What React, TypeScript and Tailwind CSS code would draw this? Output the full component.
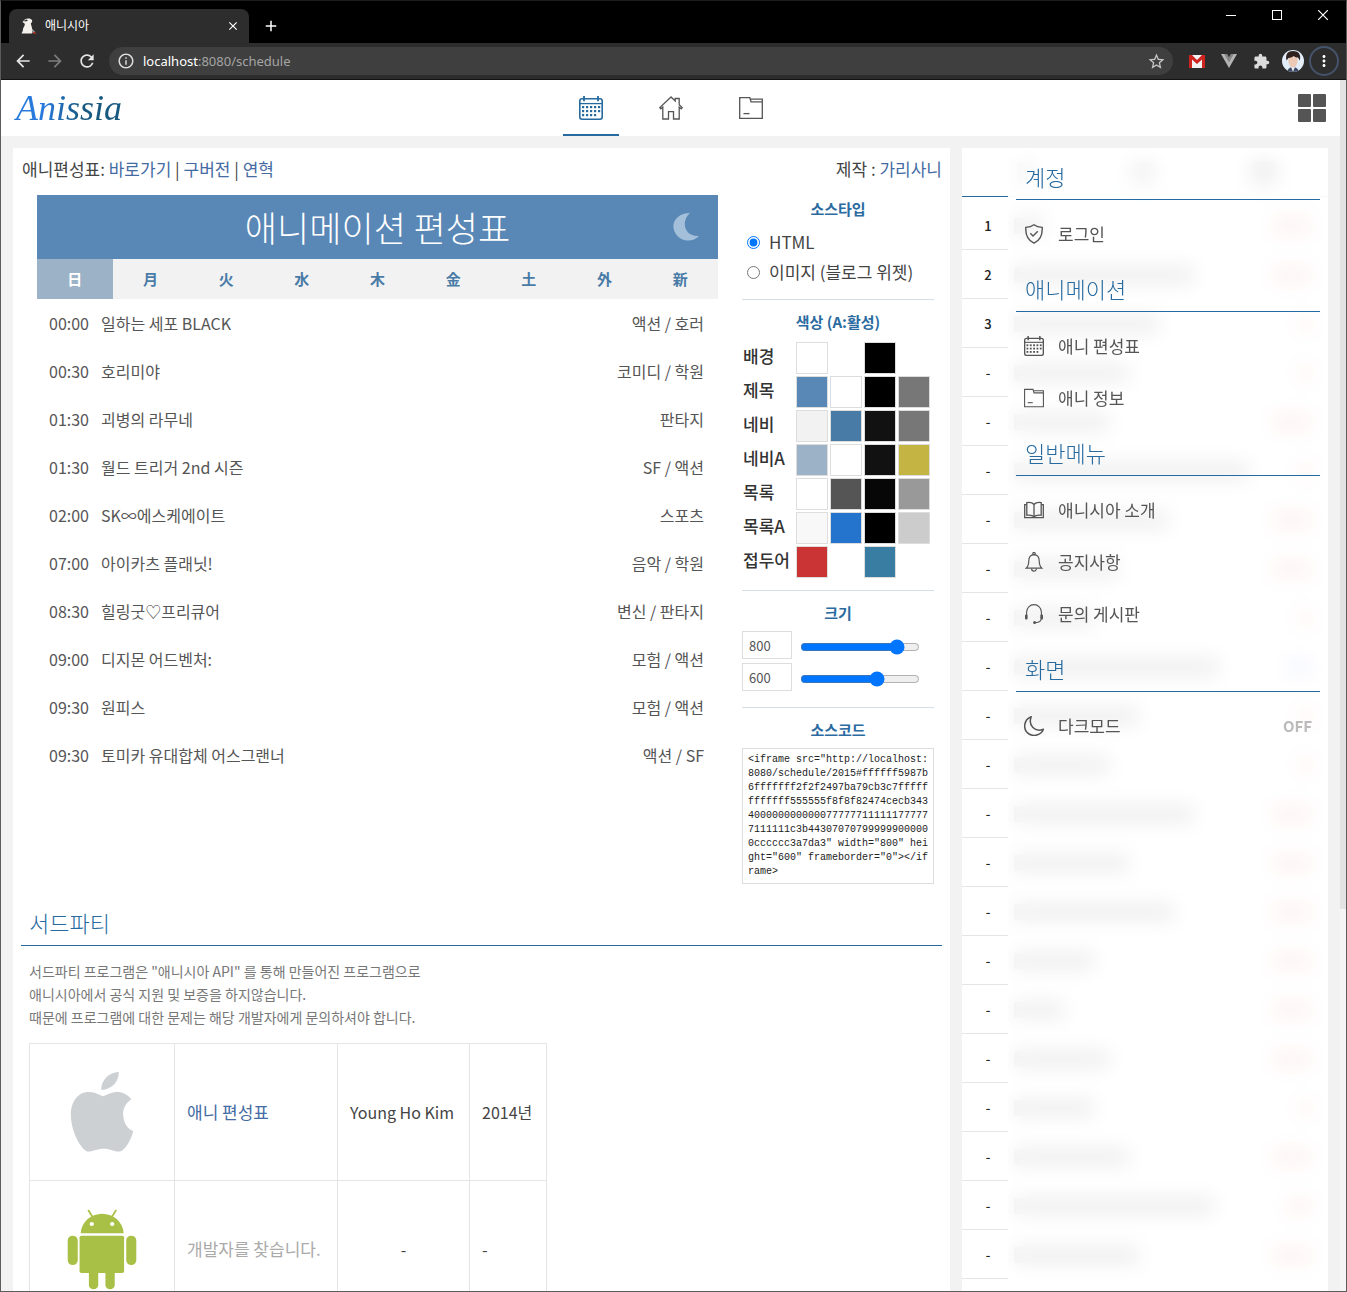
import { useState } from "react";
import type { ReactNode } from "react";
import { MdArrowBack, MdArrowForward, MdRefresh, MdInfoOutline, MdStarBorder, MdExtension, MdMoreVert, MdClose, MdAdd } from "react-icons/md";

type IconProps = { className?: string };

function CalendarIcon({ className = "" }: IconProps) {
  const dots = [
    [4, 11], [8, 11], [12, 11], [16, 11], [20, 11],
    [4, 15], [8, 15], [12, 15], [16, 15], [20, 15],
    [4, 19], [8, 19], [12, 19], [16, 19],
  ];
  return (
    <svg viewBox="0 0 24 24" className={className} fill="none" stroke="currentColor" aria-hidden="true">
      <rect x="0.8" y="2.8" width="22.4" height="20.4" rx="2.2" strokeWidth="1.6" />
      <path d="M1 7.6h22" strokeWidth="1.3" />
      <path d="M5 0v5.2M19 0v5.2" strokeWidth="1.8" />
      {dots.map(([x, y]) => (
        <rect key={`${x}-${y}`} x={x - 1} y={y - 1} width="2.2" height="2.2" fill="currentColor" stroke="none" />
      ))}
    </svg>
  );
}

function HomeIcon({ className = "" }: IconProps) {
  return (
    <svg viewBox="0 0 24 24" className={className} fill="none" stroke="currentColor" strokeWidth="1.3" aria-hidden="true">
      <path d="M12 1 .8 11.600l1 1.200 2-1.600V23h5.700v-7.400h5V23h5.700V11.200l2 1.600 1-1.200-3-2.800V2.500h-4v2.400z" />
    </svg>
  );
}

function FolderIcon({ className = "" }: IconProps) {
  return (
    <svg viewBox="0 0 24 24" className={className} fill="none" stroke="currentColor" strokeWidth="1.3" aria-hidden="true">
      <path d="M.7 1.600h10.100l1.200 4.200h11.300v16.600H.7z" />
      <path d="M11 3.200h12.300v2.600" />
      <path d="M4.500 17.600h6" />
    </svg>
  );
}

function ShieldIcon({ className = "" }: IconProps) {
  return (
    <svg viewBox="0 0 20 20" className={className} fill="none" stroke="currentColor" strokeWidth="1.4" aria-hidden="true">
      <path d="M10 .8c2.200 1.600 5 2.400 8.200 2.600.400 7.400-1.600 12.600-8.200 15.800C3.400 16 1.400 10.800 1.800 3.400 5 3.200 7.800 2.400 10 .8z" />
      <path d="m6.300 9.300 2.700 2.700 4.800-4.800" />
    </svg>
  );
}

function BookIcon({ className = "" }: IconProps) {
  return (
    <svg viewBox="0 0 20 20" className={className} fill="none" stroke="currentColor" strokeWidth="1.300" aria-hidden="true">
      <path d="M10 4.500C8.500 2.600 5.500 2.200 2.800 2.600v12.600c2.700-.3 5.700-.1 7.200 1.600 1.500-1.700 4.500-1.900 7.200-1.600V2.600C14.500 2.200 11.500 2.600 10 4.500zv12.300" />
      <path d="M2.800 4.600H.700v13h18.600v-13h-2.100" />
    </svg>
  );
}

function BellIcon({ className = "" }: IconProps) {
  return (
    <svg viewBox="0 0 20 20" className={className} fill="none" stroke="currentColor" strokeWidth="1.200" aria-hidden="true">
      <path d="M10 2.600c-3.600 0-5.200 2.600-5.200 6.200 0 4-.8 5.800-2.600 7.400h15.600c-1.800-1.600-2.600-3.400-2.600-7.400 0-3.600-1.600-6.200-5.200-6.200z" />
      <circle cx="10" cy="1.700" r="1.200" />
      <path d="M7.600 16.400c0 3.600 4.800 3.600 4.800 0" />
    </svg>
  );
}

function HeadsetIcon({ className = "" }: IconProps) {
  return (
    <svg viewBox="0 0 20 20" className={className} fill="none" stroke="currentColor" strokeWidth="1.1" aria-hidden="true">
      <path d="M2.600 11V8a7.400 7.400 0 0 1 14.800 0v6c0 3-2 4.600-6 4.700" />
      <rect x="1" y="10.400" width="2.600" height="5" rx="1" fill="currentColor" stroke="none" />
      <rect x="16.400" y="10.400" width="2.600" height="5" rx="1" fill="currentColor" stroke="none" />
      <circle cx="10.600" cy="18.500" r="1.500" fill="currentColor" stroke="none" />
    </svg>
  );
}

function MoonIcon({ className = "" }: IconProps) {
  return (
    <svg viewBox="0 0 20 20" className={className} fill="none" stroke="currentColor" strokeWidth="1.500" strokeLinejoin="round" aria-hidden="true">
      <path d="M7.200.7C-.5 3.500-1.500 14 5 18c5.500 3.300 12.500.5 14.400-4.800C11 16.600 3.800 9.500 7.200.7z" />
    </svg>
  );
}

function AppleLogo() {
  return (
    <svg viewBox="190 120 190 252" preserveAspectRatio="none" className="mx-auto h-21 w-[68px]" fill="#ccd0d3" role="img" aria-label="Apple">
      <path d="M287 199C275 192 262 186 248 186 216 186 198 218 198 254c0 46 24 96 42 108 12 8 24-6 50-6 24 0 36 14 50 6 14-8 28-38 32-59-16-5-28-27-28-51 0-20 10-34 23-44-9-14-25-22-39-22-16 0-28 8-41 13z" />
      <path d="M332 126c0 26-16 52-49 54-1-28 19-52 49-54z" />
    </svg>
  );
}

function AndroidLogo() {
  return (
    <svg viewBox="188 536 195 243" preserveAspectRatio="none" className="mx-auto h-[81px] w-[70px]" fill="#a9c047" role="img" aria-label="Android">
      <path d="M226 609c2-34 28-59 60-59s58 25 60 59z" />
      <path d="m247 539 13 22M325 539l-13 22" stroke="#a9c047" strokeWidth="5" />
      <rect x="190" y="616" width="28" height="88" rx="14" />
      <rect x="353" y="616" width="28" height="88" rx="14" />
      <rect x="223" y="616" width="124" height="112" rx="5" />
      <rect x="249" y="700" width="26" height="77" rx="13" />
      <rect x="295" y="700" width="26" height="77" rx="13" />
      <circle cx="257" cy="581" r="6" fill="#fff" />
      <circle cx="314" cy="581" r="6" fill="#fff" />
    </svg>
  );
}

function BrowserChrome() {
  return (
    <div className="shrink-0 border-b border-[#141414] bg-[#2d2d2d] font-['Noto_Sans','Noto_Sans_CJK_KR',sans-serif] text-white">
      <div className="flex h-[42px] bg-black">
        <div className="mt-2 ml-2 flex w-60 items-center rounded-t-lg bg-[#2d2d2d] pr-2 pl-3">
          <svg viewBox="0 0 16 16" className="size-4 shrink-0" aria-hidden="true">
            <path d="M1.500 4 4 1.200C6 0 10 0 11 2c.6 1.500-.2 2.600-1.200 3.400L11 10l.6 4.500-1 1H.5c.6-1.500 1.200-2 1.400-3.500C2 9 4.500 8 3.600 5.600z" fill="#f4f1ec" />
            <path d="m2.500 3 2.800-1.400 1.700.6-2 1.200z" fill="#333" />
            <path d="m12 15.500.6-2 3 2z" fill="#d8382c" />
            <path d="m10.500 11 3 3" stroke="#ddd" />
          </svg>
          <span className="ml-2 flex-1 text-xs leading-4">애니시아</span>
          <button aria-label="Close tab" className="grid size-4 place-items-center"><MdClose className="size-3.5" /></button>
        </div>
        <button aria-label="New tab" className="mt-2 ml-3 grid w-5 place-items-center"><MdAdd className="size-[18px]" /></button>
        <div className="ml-auto flex h-7">
          <button aria-label="Minimize" className="grid w-[46px] place-items-center"><span className="h-px w-2.5 bg-white" /></button>
          <button aria-label="Maximize" className="grid w-[46px] place-items-center"><span className="size-2.5 border border-white" /></button>
          <button aria-label="Close" className="grid w-[46px] place-items-center">
            <svg viewBox="0 0 10 10" className="size-2.5" stroke="#fff" strokeWidth="1.2"><path d="m0 0 10 10M10 0 0 10" /></svg>
          </button>
        </div>
      </div>
      <div className="flex h-9 items-center pr-[7px] pl-3">
        <button aria-label="Back" className="w-8"><MdArrowBack className="size-5 text-[#e4e4e4]" /></button>
        <button aria-label="Forward" className="w-8"><MdArrowForward className="size-5 text-[#7d7d7d]" /></button>
        <button aria-label="Reload" className="w-8"><MdRefresh className="size-5 text-[#e4e4e4]" /></button>
        <div className="flex h-7 flex-1 items-center rounded-full bg-[#3f3f3f] pr-[7px] pl-2">
          <MdInfoOutline className="size-[18px] text-[#dcdcdc]" />
          <div className="ml-2 flex-1 text-[13px] leading-5 text-[#a5a5a5]"><span className="text-white">localhost</span>:8080/schedule</div>
          <button aria-label="Bookmark"><MdStarBorder className="size-[19px] text-[#c8c8c8]" /></button>
        </div>
        <div className="ml-2 flex items-center">
          <div className="grid w-8 place-items-center">
            <svg viewBox="0 0 16 13" className="h-[13px] w-4" aria-label="Gmail" role="img">
              <rect width="16" height="13" rx="1" fill="#f3f3f3" />
              <path d="M0 0h3l5 5 5-5h3v13h-3V4.500l-5 4.500-5-4.500V13H0z" fill="#cf2320" />
            </svg>
          </div>
          <div className="grid w-8 place-items-center">
            <svg viewBox="0 0 16 14" className="h-3.5 w-4" aria-hidden="true">
              <path d="M0 0h5.500L8 4.500 10.500 0H16L8 14z" fill="#b5b5b5" />
              <path d="M3.200 0h3L8 3.200 9.800 0h3L8 8.500z" fill="#858585" />
            </svg>
          </div>
          <div className="grid w-8 place-items-center"><MdExtension className="size-[17px] text-[#dcdcdc]" /></div>
          <div className="grid w-8 place-items-center">
            <svg viewBox="0 0 22 22" className="size-[22px] rounded-full" role="img" aria-label="Profile">
              <rect width="22" height="22" fill="#e3eefa" />
              <path d="M5 22c1-4 4-5 6-5s5 1 6 5z" fill="#3d4963" />
              <ellipse cx="11" cy="11" rx="4.600" ry="6.500" fill="#ecc9b4" />
              <path d="M4.500 10.500C3 4 6 1 11 1s8.500 3 6.800 9.500L16 7.500c-2 .5-3-1-4.500-1.500C10 8 8 7.500 6.500 8z" fill="#2f211d" />
              <path d="m9 17 2 5 2-5z" fill="#e8e8ee" />
            </svg>
          </div>
          <button aria-label="Menu" className="grid size-[30px] place-items-center rounded-full border-2 border-[#45536b]"><MdMoreVert className="size-[18px]" /></button>
        </div>
      </div>
    </div>
  );
}

const tabs = [
  { label: "애니 편성표", Icon: CalendarIcon },
  { label: "홈", Icon: HomeIcon },
  { label: "애니 정보", Icon: FolderIcon },
];

function AppHeader() {
  return (
    <header className="grid h-14 shrink-0 grid-cols-[1fr_auto_1fr] bg-white">
      <a href="#" className="self-center justify-self-start bg-linear-to-r from-[#2779dc] from-35% to-[#17587f] to-65% bg-clip-text pr-1 pl-[15px] font-['Liberation_Serif',serif] text-4xl leading-[44px] text-transparent italic">
        Anissia
      </a>
      <nav className="flex gap-6">
        {tabs.map(({ label, Icon }, i) => (
          <a
            key={label}
            href="#"
            aria-label={label}
            className={i === 0 ? "grid w-14 place-items-center border-y-2 border-t-transparent border-b-[#266a9f] text-[#266a9f]" : "grid w-14 place-items-center border-y-2 border-transparent text-[#555]"}
          >
            <Icon className="size-6" />
          </a>
        ))}
      </nav>
      <button aria-label="메뉴" className="mr-[14px] grid grid-cols-2 gap-0.5 self-center justify-self-end">
        {[0, 1, 2, 3].map((n) => (
          <span key={n} className="size-[13px] rounded-[1px] bg-[#555]" />
        ))}
      </button>
    </header>
  );
}

const days = ["日", "月", "火", "水", "木", "金", "土", "外", "新"];
const shows = [
  ["00:00", "일하는 세포 BLACK", "액션 / 호러"],
  ["00:30", "호리미야", "코미디 / 학원"],
  ["01:30", "괴병의 라무네", "판타지"],
  ["01:30", "월드 트리거 2nd 시즌", "SF / 액션"],
  ["02:00", "SK∞에스케에이트", "스포츠"],
  ["07:00", "아이카츠 플래닛!", "음악 / 학원"],
  ["08:30", "힐링굿♡프리큐어", "변신 / 판타지"],
  ["09:00", "디지몬 어드벤처:", "모험 / 액션"],
  ["09:30", "원피스", "모험 / 액션"],
  ["09:30", "토미카 유대합체 어스그랜너", "액션 / SF"],
];

function Timetable() {
  const [day, setDay] = useState(0);
  return (
    <section className="min-w-0 flex-1">
      <div className="flex h-16 items-center bg-[#5987b6] px-4 text-white">
        <span className="w-8" />
        <h1 className="flex-1 text-center text-[35px] leading-10 font-light">애니메이션 편성표</h1>
        <button aria-label="다크모드" className="grid w-8 place-items-center">
          <svg viewBox="0 0 26 28" className="h-7 w-[26px]" fill="#a3bfd9"><path d="M17 0C4 0-3 10 2 19.500c4.500 9 17 11 24 3.500C12 24 7 9 17 0z" /></svg>
        </button>
      </div>
      <div className="grid h-10 grid-cols-9 bg-[#f2f2f2] text-[15px] font-bold">
        {days.map((d, i) => (
          <button key={d} onClick={() => setDay(i)} className={i === day ? "bg-[#9cb3c7] text-white" : "text-[#497ba7]"}>
            {d}
          </button>
        ))}
      </div>
      <ul className="text-base text-[#555]">
        {shows.map(([time, title, genre]) => (
          <li key={title} className="flex h-12 items-center pr-3.5 pl-3">
            <span className="w-[52px]">{time}</span>
            <span className="flex-1">{title}</span>
            <span>{genre}</span>
          </li>
        ))}
      </ul>
    </section>
  );
}

const palette: { name: string; colors: (string | null)[] }[] = [
  { name: "배경", colors: ["#ffffff", null, "#000000", null] },
  { name: "제목", colors: ["#5987b6", "#ffffff", "#000000", "#777777"] },
  { name: "네비", colors: ["#f2f2f2", "#497ba7", "#111111", "#777777"] },
  { name: "네비A", colors: ["#9cb3c7", "#ffffff", "#111111", "#c3b443"] },
  { name: "목록", colors: ["#ffffff", "#555555", "#070707", "#999999"] },
  { name: "목록A", colors: ["#f8f8f8", "#2474ce", "#000000", "#cccccc"] },
  { name: "접두어", colors: ["#cb3434", null, "#3a7da3", null] },
];

function GroupTitle({ children }: { children: ReactNode }) {
  return <h3 className="text-center text-[15px] leading-5 font-bold text-[#2b6b9f]">{children}</h3>;
}

function SizeField({ label, value, max, onChange }: { label: string; value: number; max: number; onChange: (n: number) => void }) {
  return (
    <div className="flex h-7 items-center">
      <input
        type="text"
        aria-label={label}
        value={value}
        onChange={(e) => onChange(Number(e.target.value) || 0)}
        className="h-7 w-[50px] border border-[#ddd] px-1.5 text-[13px] text-[#555]"
      />
      <input
        type="range"
        aria-label={label}
        min={200}
        max={max}
        value={value}
        onChange={(e) => onChange(Number(e.target.value))}
        className="mt-1 ml-2 w-30 accent-[#0075ff]"
      />
    </div>
  );
}

function WidgetSettings() {
  const [kind, setKind] = useState("html");
  const [width, setWidth] = useState(800);
  const [height, setHeight] = useState(600);
  const hash = palette
    .flatMap((row) => row.colors.slice(0, 2))
    .concat(palette.flatMap((row) => row.colors.slice(2)))
    .filter((c): c is string => c !== null)
    .map((c) => c.slice(1))
    .join("");
  const code = `<iframe src="http://localhost:8080/schedule/2015#${hash}" width="${width}" height="${height}" frameborder="0"></iframe>`;
  return (
    <div className="w-48 shrink-0 divide-y divide-[#d3dfe8]">
      <div className="pt-1 pb-3">
        <GroupTitle>소스타입</GroupTitle>
        <div className="mt-2 pl-[5px] text-[17px] leading-[30px] text-[#444]">
          <label className="flex items-center gap-[9px]">
            <input type="radio" name="kind" checked={kind === "html"} onChange={() => setKind("html")} className="size-[13px] accent-[#0075ff]" />
            HTML
          </label>
          <label className="flex items-center gap-[9px]">
            <input type="radio" name="kind" checked={kind === "image"} onChange={() => setKind("image")} className="size-[13px] accent-[#0075ff]" />
            이미지 (블로그 위젯)
          </label>
        </div>
      </div>
      <div className="pt-3 pb-3">
        <GroupTitle>색상 (A:활성)</GroupTitle>
        <div className="mt-2.5 flex flex-col gap-0.5">
          {palette.map((row) => (
            <div key={row.name} className="flex h-8 gap-0.5">
              <span className="w-[52px] pl-px text-[17px] leading-7 font-medium whitespace-nowrap text-[#333]">{row.name}</span>
              {row.colors.map((color, i) =>
                color ? (
                  <input
                    key={i}
                    type="color"
                    defaultValue={color}
                    aria-label={`${row.name} ${i + 1}`}
                    className="size-8 appearance-none border border-[#ddd] bg-white p-0 [&::-webkit-color-swatch]:rounded-none [&::-webkit-color-swatch]:border-0 [&::-webkit-color-swatch-wrapper]:p-0"
                  />
                ) : (
                  <span key={i} className="size-8" />
                ),
              )}
            </div>
          ))}
        </div>
      </div>
      <div className="pt-3 pb-4">
        <GroupTitle>크기</GroupTitle>
        <div className="mt-2 flex flex-col gap-1">
          <SizeField label="너비" value={width} max={900} onChange={setWidth} />
          <SizeField label="높이" value={height} max={800} onChange={setHeight} />
        </div>
      </div>
      <div className="pt-3">
        <GroupTitle>소스코드</GroupTitle>
        <textarea
          readOnly
          rows={9}
          aria-label="소스코드"
          value={code}
          className="mt-2 block w-full resize-none overflow-hidden border border-[#ddd] py-1 pr-1 pl-[5px] font-['Liberation_Mono',monospace] text-[10px] leading-[14px] break-all text-[#222]"
        />
      </div>
    </div>
  );
}

function ThirdParty() {
  return (
    <section className="mt-5">
      <h2 className="border-b border-[#266a9f] px-2 pb-1 text-[22px] leading-[37px] font-light text-[#266a9f]">서드파티</h2>
      <p className="mt-3.5 px-2 text-sm leading-[23px] text-[#777]">
        서드파티 프로그램은 "애니시아 API" 를 통해 만들어진 프로그램으로
        <br />
        애니시아에서 공식 지원 및 보증을 하지않습니다.
        <br />
        때문에 프로그램에 대한 문제는 해당 개발자에게 문의하셔야 합니다.
      </p>
      <table className="mt-3.5 ml-2 border-collapse text-base text-[#444] [&_td]:h-[137px] [&_td]:border [&_td]:border-[#e5e5e5] [&_td]:px-3">
        <tbody>
          <tr>
            <td className="w-[145px]"><AppleLogo /></td>
            <td className="w-[163px] text-[17px]"><a href="#" className="text-[#456ba3]">애니 편성표</a></td>
            <td className="w-[132px] whitespace-nowrap">Young Ho Kim</td>
            <td className="w-[77px]">2014년</td>
          </tr>
          <tr>
            <td><AndroidLogo /></td>
            <td className="text-[17px] whitespace-nowrap text-[#aaa]">개발자를 찾습니다.</td>
            <td className="text-center">-</td>
            <td>-</td>
          </tr>
        </tbody>
      </table>
    </section>
  );
}

const ranks = [
  { title: 30, change: 40 }, { title: 180, change: 40 }, { title: 145, change: 14 }, { title: 115, change: 14 },
  { title: 95, change: 40 }, { title: 235, change: 14 }, { title: 155, change: 40 }, { title: 105, change: 40 },
  { title: 80, change: 14 }, { title: 205, change: 26 }, { title: 125, change: 14 }, { title: 95, change: 14 },
  { title: 180, change: 40 }, { title: 115, change: 40 }, { title: 160, change: 40 }, { title: 80, change: 40 },
  { title: 50, change: 40 }, { title: 95, change: 40 }, { title: 80, change: 14 }, { title: 115, change: 40 },
  { title: 200, change: 26 }, { title: 125, change: 40 },
];

function RankList() {
  return (
    <div>
      <div className="flex h-[49px] items-center justify-between border-b border-[#266a9f] pr-13 pl-14">
        <span className="h-5 w-4 bg-[#888]" />
        <span className="h-5 w-6 bg-[#666]" />
        <span className="h-5 w-6 bg-[#222]" />
      </div>
      <ol>
        {ranks.map((row, i) => (
          <li key={i} className={i === 0 ? "flex h-[53px] items-center border-b border-[#e5e5e5] pt-1.5 pr-4" : "flex h-[49px] items-center border-b border-[#e5e5e5] pt-0.5 pr-4"}>
            <span className="w-[52px] text-center text-[13px] font-medium text-[#222]">{i < 3 ? i + 1 : "-"}</span>
            <span className="mr-auto h-4 bg-[#444]" style={{ width: row.title }} />
            <span className={i === 9 ? "h-4 bg-[#8e9be8]" : "h-4 bg-[#ec6c6c]"} style={{ width: row.change }} />
          </li>
        ))}
      </ol>
    </div>
  );
}

type MenuItem = { label: string; Icon: (p: IconProps) => ReactNode; state?: string };
const menu: { title: string; items: MenuItem[] }[] = [
  { title: "계정", items: [{ label: "로그인", Icon: ShieldIcon }] },
  { title: "애니메이션", items: [{ label: "애니 편성표", Icon: CalendarIcon }, { label: "애니 정보", Icon: FolderIcon }] },
  {
    title: "일반메뉴",
    items: [{ label: "애니시아 소개", Icon: BookIcon }, { label: "공지사항", Icon: BellIcon }, { label: "문의 게시판", Icon: HeadsetIcon }],
  },
  { title: "화면", items: [{ label: "다크모드", Icon: MoonIcon, state: "OFF" }] },
];

function SideMenu() {
  return (
    <div className="absolute inset-y-0 right-0 w-80 bg-white/90 px-2 pt-2 backdrop-blur-[10px]">
      {menu.map((section) => (
        <section key={section.title}>
          <h2 className="h-11 border-b border-[#266a9f] pl-[9px] text-[22px] leading-10 font-light text-[#266a9f]">{section.title}</h2>
          <ul className="py-2">
            {section.items.map(({ label, Icon, state }) => (
              <li key={label}>
                <a href="#" className="flex h-[52px] items-center px-2 text-[17px] text-[#555]">
                  <Icon className="mr-3.5 size-5 text-[#555]" />
                  <span className="flex-1">{label}</span>
                  {state && <b className="text-[15px] text-[#bbb]">{state}</b>}
                </a>
              </li>
            ))}
          </ul>
        </section>
      ))}
    </div>
  );
}

export default function App() {
  return (
    <div className="flex h-screen flex-col overflow-hidden border border-[#5c5c5c] border-t-[#1c1c1c] font-['Noto_Sans_CJK_KR',sans-serif]">
      <BrowserChrome />
      <div className="flex min-h-0 flex-1 bg-[#f2f2f2]">
        <div className="flex min-w-0 flex-1 flex-col overflow-hidden">
          <AppHeader />
          <div className="flex items-start gap-3 p-3">
            <main className="min-w-0 flex-1 bg-white px-2 pt-2 pb-8">
              <div className="flex justify-between pl-px text-[17px] leading-[26px] text-[#444]">
                <div>
                  애니편성표: <a href="#" className="text-[#456ba3]">바로가기</a> | <a href="#" className="text-[#456ba3]">구버전</a> |{" "}
                  <a href="#" className="text-[#456ba3]">연혁</a>
                </div>
                <div>
                  제작 : <a href="#" className="text-[#456ba3]">가리사니</a>
                </div>
              </div>
              <div className="mt-[13px] flex gap-6 pr-2 pl-4">
                <Timetable />
                <WidgetSettings />
              </div>
              <ThirdParty />
            </main>
            <aside className="w-[366px] shrink-0 bg-white pb-12">
              <div className="relative">
                <RankList />
                <SideMenu />
              </div>
            </aside>
          </div>
        </div>
        <div className="w-1.5 shrink-0 bg-[#f5f5f5]"><div className="h-[829px] bg-[#e3e3e3]" /></div>
      </div>
    </div>
  );
}
